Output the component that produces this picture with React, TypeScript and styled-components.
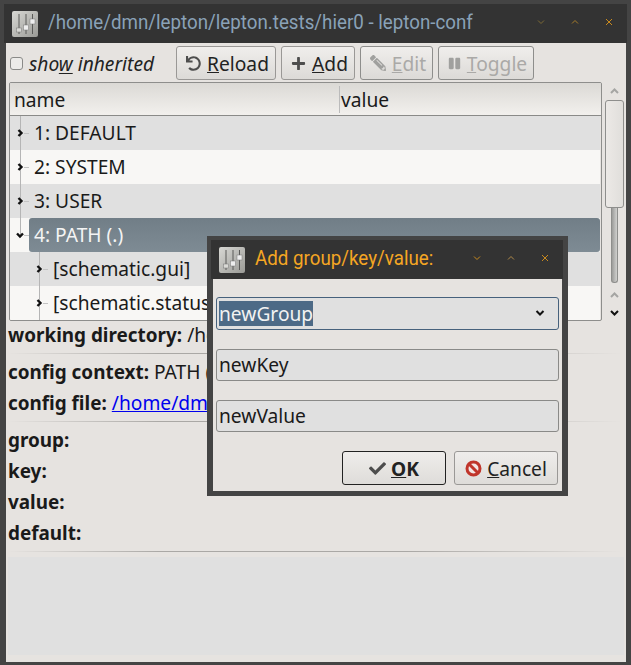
import styled, { createGlobalStyle } from 'styled-components';
import { FaUndo, FaPlus, FaPencilAlt, FaPause, FaCheck } from 'react-icons/fa';

const Global = createGlobalStyle`
  html, body { margin: 0; padding: 0; background: #444; }
  * { box-sizing: border-box; }
`;

const Frame = styled.div`
  position: relative;
  width: 631px;
  height: 665px;
  padding: 4px 5px 3px 5px;
  background: #444;
  font-family: 'Noto Sans', sans-serif;
  font-size: 19.2px;
  color: #1a1a1a;
  overflow: hidden;
  display: flex;
  flex-direction: column;
`;

const TitleBar = styled.div`
  height: 39px;
  flex: none;
  margin: 0 -1px 0 -1px;
  padding: 0 0 0 8px;
  background: #333;
  display: flex;
  align-items: center;
`;

const AppIcon = styled.svg`
  flex: none;
  width: 26px;
  height: 26px;
`;

const TitleText = styled.div<{ $active?: boolean }>`
  font-family: 'Roboto', sans-serif;
  font-size: 21px;
  white-space: nowrap;
  color: ${(p) => (p.$active ? '#f5a623' : '#8aa2b8')};
  transform: scaleX(0.893);
  transform-origin: left center;
  margin-left: 10px;
  padding-bottom: 3px;
  flex: 1;
`;

const WinButtons = styled.div<{ $gap: number; $right: number }>`
  display: flex;
  gap: ${(p) => p.$gap}px;
  margin-right: ${(p) => p.$right}px;
  margin-bottom: 3px;
  align-items: center;
`;

const Body = styled.div`
  flex: 1;
  margin: 0 0 0 1px;
  background: #e6e3e0;
  padding: 2px 2px 0 3px;
  display: flex;
  flex-direction: column;
`;

const Toolbar = styled.div`
  height: 36px;
  flex: none;
  display: flex;
  align-items: center;
`;

const CheckBox = styled.span`
  width: 13px;
  height: 13px;
  margin-left: 1px;
  border: 1px solid #8a8a88;
  border-radius: 3px;
  background: #ecebe9;
`;

const CheckLabel = styled.span`
  font-style: italic;
  margin-left: 6px;
  width: 147px;
  color: #222;
  u { text-underline-offset: 2px; }
`;

const ToolButton = styled.button<{ $w: number; $disabled?: boolean }>`
  width: ${(p) => p.$w}px;
  height: 34px;
  margin-right: 5px;
  padding: 0 0 0 3px;
  font: inherit;
  border: 1px solid ${(p) => (p.$disabled ? '#8e8e8c' : '#9a9896')};
  border-radius: 3px;
  background: linear-gradient(#f0eeec, #dcdad7);
  color: ${(p) => (p.$disabled ? '#aaa9a7' : '#222')};
  display: flex;
  align-items: center;
  justify-content: center;
  gap: 6px;
  svg { color: ${(p) => (p.$disabled ? '#a0a09e' : '#4d4d4d')}; }
  svg.flip { transform: scaleX(-1); }
`;

const TreeArea = styled.div`
  flex: none;
  height: 239px;
  margin-top: 1px;
  display: flex;
`;

const Tree = styled.div`
  width: 593px;
  flex: none;
  border: 1px solid #8e8e8c;
  border-radius: 2px;
  overflow: hidden;
`;

const Header = styled.div`
  height: 33px;
  display: flex;
  align-items: center;
  background: linear-gradient(#dbd9d5, #f2f0ed);
  border-bottom: 1px solid #8a8a88;
  padding-left: 4px;
`;

const HeaderName = styled.div`
  width: 325px;
`;

const HeaderValue = styled.div`
  border-left: 1px solid #bbb;
  padding-left: 1px;
`;

const Row = styled.div<{ $odd: boolean }>`
  height: 34px;
  margin-right: 1px;
  display: flex;
  align-items: stretch;
  background: ${(p) => (p.$odd ? '#e0e0e0' : '#f8f7f5')};
`;

const Branch = styled.div<{ $depth: number; $last?: boolean }>`
  position: relative;
  flex: none;
  width: ${(p) => 19 + p.$depth * 19}px;
  &::before {
    content: '';
    position: absolute;
    left: ${(p) => 10 + p.$depth * 19}px;
    top: 0;
    height: ${(p) => (p.$last ? '17px' : '100%')};
    width: 1px;
    background: #b5b5b5;
  }
  &::after {
    content: '';
    position: absolute;
    left: ${(p) => 14 + p.$depth * 19}px;
    top: 17px;
    width: 5px;
    height: 1px;
    background: #c4c4c4;
  }
  svg {
    position: absolute;
    left: ${(p) => 6 + p.$depth * 19}px;
    top: 13px;
    z-index: 1;
  }
`;

const RowLabel = styled.div<{ $selected?: boolean }>`
  flex: 1;
  display: flex;
  align-items: center;
  padding: 0 0 2px 5px;
  white-space: nowrap;
  border-radius: ${(p) => (p.$selected ? '3px' : '0')};
  background: ${(p) => (p.$selected ? 'linear-gradient(#717e87, #7e8b94)' : 'transparent')};
  color: ${(p) => (p.$selected ? '#f4f4f4' : '#1a1a1a')};
`;

const ScrollBar = styled.div`
  width: 19px;
  margin-left: 3px;
  display: flex;
  flex-direction: column;
  align-items: center;
`;

const ScrollArrow = styled.svg<{ $mt?: number }>`
  flex: none;
  width: 9px;
  height: 6px;
  margin-top: ${(p) => p.$mt ?? 0}px;
`;

const Thumb = styled.div`
  flex: none;
  width: 19px;
  height: 108px;
  margin-top: 6px;
  border: 1px solid #8e8e8c;
  border-radius: 3px;
  background: linear-gradient(90deg, #ece9e6, #e0dedb);
`;

const Track = styled.div`
  flex: none;
  width: 7px;
  height: 75px;
  margin-bottom: 9px;
  border: 1px solid #8e8e8c;
  border-top: none;
  border-radius: 0 0 3px 3px;
  background: linear-gradient(90deg, #9c9c9a, #d0d0ce);
`;

const Info = styled.div`
  flex: none;
  margin: -1px 0 0 -1px;
`;

const InfoLine = styled.div`
  height: 31px;
  line-height: 29px;
  white-space: nowrap;
  b { font-weight: 700; font-size: 18.9px; }
  a { color: #0000ee; }
`;

const Rule = styled.div<{ $mb: number }>`
  height: 1px;
  margin: 2px 3px ${(p) => p.$mb}px 0;
  background: linear-gradient(90deg, transparent, #aaa8a5 25%, #aaa8a5 65%, transparent);
`;

const EmptyPane = styled.div`
  flex: none;
  height: 98px;
  margin-left: -1px;
  background: #e0e0e0;
`;

const Dialog = styled.div`
  position: absolute;
  left: 207px;
  top: 236px;
  width: 361px;
  height: 260px;
  padding: 4px 6px 5px 4px;
  background: #444;
  display: flex;
  flex-direction: column;
`;

const DialogBar = styled(TitleBar)`
  margin: 0 -1px 0 0;
  padding-left: 8px;
`;

const DialogBody = styled.div`
  flex: 1;
  margin-left: 2px;
  background: #e6e3e0;
  padding: 18px 3px 0 3px;
  display: flex;
  flex-direction: column;
`;

const Field = styled.div<{ $focus?: boolean }>`
  height: ${(p) => (p.$focus ? 33 : 32)}px;
  margin-bottom: 19px;
  border: 1px solid ${(p) => (p.$focus ? '#46617c' : '#8a8a88')};
  border-radius: 3px;
  background: #e0e0e0;
  padding: 0 2px 1px;
  display: flex;
  align-items: center;
  justify-content: space-between;
`;

const Selected = styled.span`
  background: #4d6a86;
  color: #f2f2f2;
  height: 25px;
  line-height: 25px;
`;

const ComboArrow = styled.svg`
  width: 10px;
  height: 8px;
  margin-right: 11px;
`;

const DialogButtons = styled.div`
  display: flex;
  justify-content: flex-end;
  gap: 8px;
  margin-right: 1px;
`;

const DialogButton = styled.button<{ $w: number; $default?: boolean }>`
  width: ${(p) => p.$w}px;
  height: 34px;
  padding: 0;
  font: inherit;
  font-weight: ${(p) => (p.$default ? 700 : 400)};
  color: #222;
  border: 1px solid ${(p) => (p.$default ? '#222' : '#9a9896')};
  border-radius: 3px;
  background: linear-gradient(#efedeb, #dedcd9);
  display: flex;
  align-items: center;
  justify-content: center;
  gap: 5px;
  svg.check { color: #4d4d4d; }
`;

const SlidersIcon = () => (
  <AppIcon viewBox="0 0 26 26">
    <defs>
      <linearGradient id="sl" x1="0" y1="0" x2="1" y2="1">
        <stop offset="0" stopColor="#d8d8d4" />
        <stop offset="1" stopColor="#9a9a96" />
      </linearGradient>
    </defs>
    <rect x="0" y="0" width="26" height="26" rx="2" fill="url(#sl)" />
    <path d="M7 3v20M14 3v20M20.5 3v20" stroke="#5a5a58" strokeWidth="1" />
    <rect x="4.5" y="17" width="5" height="4" fill="#d9d9d5" stroke="#777" strokeWidth=".5" />
    <rect x="11.5" y="14" width="5" height="5" fill="#eee" stroke="#777" strokeWidth=".5" />
    <rect x="18" y="8" width="5" height="5" fill="#eee" stroke="#777" strokeWidth=".5" />
  </AppIcon>
);

const WinGlyph = ({ d, color }: { d: string; color: string }) => (
  <svg width="10" height="10" viewBox="0 0 10 10">
    <path d={d} fill="none" stroke={color} strokeWidth="1" />
  </svg>
);

const DOWN = 'M2 3.5L5 6.5L8 3.5';
const UP = 'M2 6.5L5 3.5L8 6.5';
const CLOSE = 'M2 2L8 8M8 2L2 8';

const Chevron = ({ open }: { open?: boolean }) => (
  <svg width="8" height="8" viewBox="0 0 8 8">
    <path
      d={open ? 'M1 2.5L4 5.5L7 2.5' : 'M2.5 1L5.5 4L2.5 7'}
      fill="none"
      stroke="#111"
      strokeWidth="2.4"
    />
  </svg>
);

const BanIcon = () => (
  <svg width="17" height="17" viewBox="0 0 17 17">
    <circle cx="8.5" cy="8.5" r="6.5" fill="#f2e6e4" stroke="#c0352b" strokeWidth="3" />
    <path d="M4 4L13 13" stroke="#c0352b" strokeWidth="3" />
  </svg>
);

const rows = [
  { depth: 0, label: '1: DEFAULT' },
  { depth: 0, label: '2: SYSTEM' },
  { depth: 0, label: '3: USER' },
  { depth: 0, label: '4: PATH (.)', open: true, selected: true },
  { depth: 1, label: '[schematic.gui]' },
  { depth: 1, label: '[schematic.status]' },
];

const App: React.FunctionComponent = () => {
  return (
    <Frame>
      <Global />
      <TitleBar>
        <SlidersIcon />
        <TitleText>/home/dmn/lepton/lepton.tests/hier0 - lepton-conf</TitleText>
        <WinButtons $gap={24} $right={13}>
          <WinGlyph d={DOWN} color="#7d6a35" />
          <WinGlyph d={UP} color="#a67c2a" />
          <WinGlyph d={CLOSE} color="#c98a1e" />
        </WinButtons>
      </TitleBar>
      <Body>
        <Toolbar>
          <CheckBox />
          <CheckLabel>
            sho<u>w</u> inherited
          </CheckLabel>
          <ToolButton $w={100}>
            <FaUndo size={15} />
            <span>
              <u>R</u>eload
            </span>
          </ToolButton>
          <ToolButton $w={74}>
            <FaPlus size={15} />
            <span>
              <u>A</u>dd
            </span>
          </ToolButton>
          <ToolButton $w={73} $disabled>
            <FaPencilAlt className="flip" size={16} />
            <span>
              <u>E</u>dit
            </span>
          </ToolButton>
          <ToolButton $w={96} $disabled>
            <FaPause size={13} />
            <span>
              <u>T</u>oggle
            </span>
          </ToolButton>
        </Toolbar>
        <TreeArea>
          <Tree>
            <Header>
              <HeaderName>name</HeaderName>
              <HeaderValue>value</HeaderValue>
            </Header>
            {rows.map((r, i) => (
              <Row key={r.label} $odd={i % 2 === 0}>
                <Branch $depth={r.depth} $last={r.open}>
                  <Chevron open={r.open} />
                </Branch>
                <RowLabel $selected={r.selected}>{r.label}</RowLabel>
              </Row>
            ))}
          </Tree>
          <ScrollBar>
            <ScrollArrow viewBox="0 0 9 6" $mt={6}>
              <path d="M1 5L4.5 1.5L8 5" fill="none" stroke="#a5a5a3" strokeWidth="2" />
            </ScrollArrow>
            <Thumb />
            <Track />
            <ScrollArrow viewBox="0 0 9 6">
              <path d="M1 5L4.5 1.5L8 5" fill="none" stroke="#a5a5a3" strokeWidth="2" />
            </ScrollArrow>
            <ScrollArrow viewBox="0 0 9 6" $mt={12}>
              <path d="M1 1L4.5 4.5L8 1" fill="none" stroke="#111" strokeWidth="2" />
            </ScrollArrow>
          </ScrollBar>
        </TreeArea>
        <Info>
          <InfoLine>
            <b>working directory:</b> /home/dmn/lepton/lepton.tests/hier0
          </InfoLine>
          <Rule $mb={3} />
          <InfoLine>
            <b>config context:</b> PATH (.)
          </InfoLine>
          <InfoLine>
            <b>config file:</b> <a href="#f">/home/dmn/lepton/lepton.tests/hier0/geda.conf</a>
          </InfoLine>
          <Rule $mb={3} />
          <InfoLine>
            <b>group:</b>
          </InfoLine>
          <InfoLine>
            <b>key:</b>
          </InfoLine>
          <InfoLine>
            <b>value:</b>
          </InfoLine>
          <InfoLine>
            <b>default:</b>
          </InfoLine>
          <Rule $mb={5} />
        </Info>
        <EmptyPane />
      </Body>
      <Dialog>
        <DialogBar>
          <SlidersIcon />
          <TitleText $active>Add group/key/value:</TitleText>
          <WinButtons $gap={24} $right={13}>
            <WinGlyph d={DOWN} color="#c98a1e" />
            <WinGlyph d={UP} color="#b08a4a" />
            <WinGlyph d={CLOSE} color="#c98a1e" />
          </WinButtons>
        </DialogBar>
        <DialogBody>
          <Field $focus>
            <Selected>newGroup</Selected>
            <ComboArrow viewBox="0 0 10 8">
              <path d="M1.5 2L5 5.5L8.5 2" fill="none" stroke="#111" strokeWidth="2" />
            </ComboArrow>
          </Field>
          <Field>newKey</Field>
          <Field>newValue</Field>
          <DialogButtons>
            <DialogButton $w={104} $default>
              <FaCheck className="check" size={17} />
              <span>
                <u>O</u>K
              </span>
            </DialogButton>
            <DialogButton $w={104}>
              <BanIcon />
              <span>
                <u>C</u>ancel
              </span>
            </DialogButton>
          </DialogButtons>
        </DialogBody>
      </Dialog>
    </Frame>
  );
};

export default App;
